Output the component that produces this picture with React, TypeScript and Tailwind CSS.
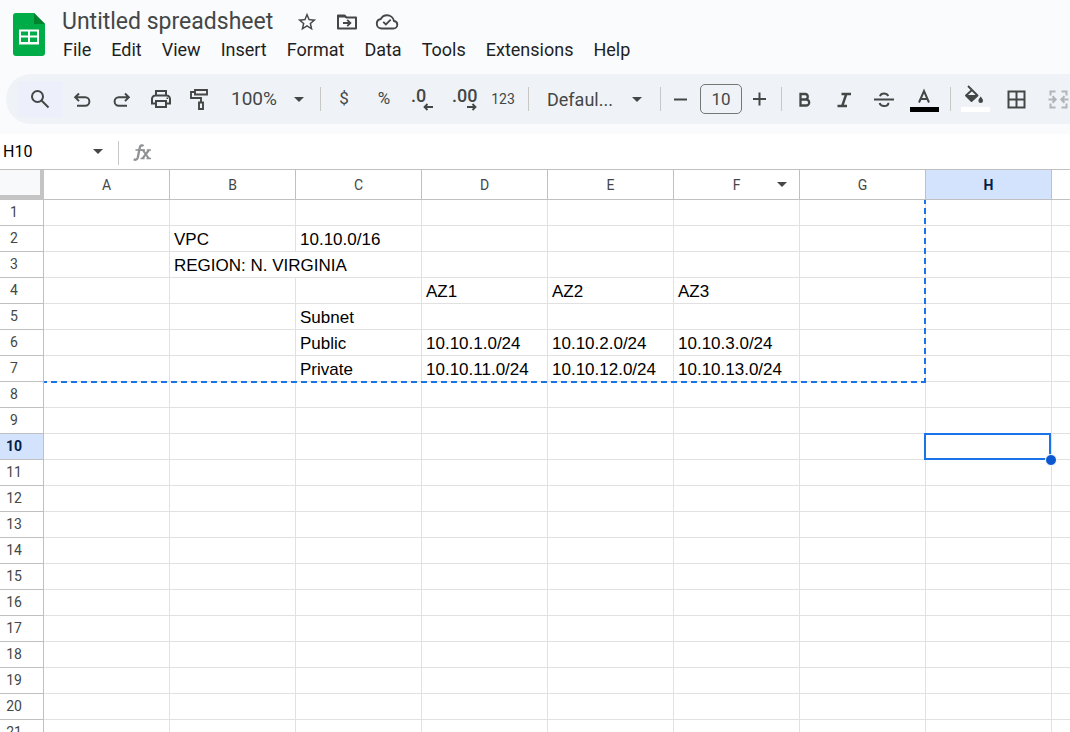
import type { ReactNode } from "react";

const menus = ["File", "Edit", "View", "Insert", "Format", "Data", "Tools", "Extensions", "Help"];
const columns = ["A", "B", "C", "D", "E", "F", "G", "H", ""];
const rows = Array.from({ length: 21 }, (_, i) => i + 1);

const cells: Record<string, string> = {
  B2: "VPC",
  C2: "10.10.0/16",
  B3: "REGION: N. VIRGINIA",
  D4: "AZ1",
  E4: "AZ2",
  F4: "AZ3",
  C5: "Subnet",
  C6: "Public",
  D6: "10.10.1.0/24",
  E6: "10.10.2.0/24",
  F6: "10.10.3.0/24",
  C7: "Private",
  D7: "10.10.11.0/24",
  E7: "10.10.12.0/24",
  F7: "10.10.13.0/24",
};

const spans: Record<string, number> = { B3: 2 };
const covered = new Set(["C3"]);

function Icon({ children, className = "size-6" }: { children: ReactNode; className?: string }) {
  return (
    <svg viewBox="0 0 24 24" className={`shrink-0 ${className}`} fill="none" stroke="currentColor" strokeWidth="2" aria-hidden="true">
      {children}
    </svg>
  );
}

function Caret({ className = "" }: { className?: string }) {
  return (
    <svg viewBox="0 0 10 5" className={`h-[5px] w-2.5 ${className}`} fill="currentColor" aria-hidden="true">
      <path d="M0 0h10L5 5z" />
    </svg>
  );
}

function Tool({ label, className = "w-10", children }: { label: string; className?: string; children: ReactNode }) {
  return (
    <button type="button" aria-label={label} className={`flex h-9 shrink-0 items-center justify-center ${className}`}>
      {children}
    </button>
  );
}

function Divider({ className = "" }: { className?: string }) {
  return <span className={`h-6 w-px shrink-0 bg-[#c7c7c7] ${className}`} />;
}

function Logo() {
  return (
    <svg viewBox="0 0 32 43" className="h-[43px] w-8 shrink-0" aria-hidden="true">
      <path d="M3 0h18l11 11v29a3 3 0 0 1-3 3H3a3 3 0 0 1-3-3V3a3 3 0 0 1 3-3z" fill="#00ac47" />
      <path d="M21 0l11 11H21z" fill="#00832d" />
      <path d="M6 16.500h20v15H6zM8 18.500v4h7v-4zM17 18.500v4h7v-4zM8 24.500v4.500h7v-4.500zM17 24.500v4.500h7v-4.500z" fill="#fff" fillRule="evenodd" />
    </svg>
  );
}

function Header() {
  return (
    <header className="flex pl-[13px] pt-2">
      <a href="#home" aria-label="Sheets home" className="mt-[5px]">
        <Logo />
      </a>
      <div className="ml-[17px]">
        <div className="flex h-7 items-center text-[#444746]">
          <input aria-label="Document title" defaultValue="Untitled spreadsheet" className="h-7 w-[233px] bg-transparent text-[23px] leading-7 outline-none" />
          <button type="button" aria-label="Star" className="flex w-6 justify-center">
            <Icon className="size-[22px]">
              <path fill="currentColor" stroke="none" d="M22 9.240l-7.190-.62L12 2 9.190 8.630 2 9.240l5.460 4.730L5.820 21 12 17.270 18.180 21l-1.630-7.030L22 9.240zM12 15.400l-3.760 2.270 1-4.280-3.320-2.880 4.380-.38L12 6.100l1.710 4.040 4.380.38-3.320 2.880 1 4.280L12 15.400z" />
            </Icon>
          </button>
          <button type="button" aria-label="Move" className="ml-4 flex w-6 justify-center">
            <Icon>
              <path d="M3 6v12.500h18V7.500H11.500L9.500 5.500H3z" strokeLinejoin="round" />
              <path d="M2.500 5h7l2 2.500h-9z" fill="currentColor" stroke="none" />
              <path d="M8 13h7M12.200 9.800l3.200 3.200-3.200 3.200" strokeWidth="1.800" />
            </Icon>
          </button>
          <button type="button" aria-label="Saved to Drive" className="ml-4 flex w-6 justify-center">
            <Icon>
              <path d="M19 11c-.6-3.300-3.500-5.800-7-5.800-2.700 0-5 1.500-6.200 3.800C3.400 9.400 1.800 11.300 1.800 13.700c0 2.600 2.100 4.800 4.800 4.800H18.400c2.200 0 3.900-1.700 3.900-3.800 0-2-1.400-3.500-3.300-3.700z" strokeWidth="1.900" />
              <path d="M8.200 11.800l2.700 2.700 4.800-4.900" strokeWidth="1.800" />
            </Icon>
          </button>
        </div>
        <nav className="flex h-7 items-center gap-5 pl-px text-[18px] leading-7 text-[#1f1f1f]">
          {menus.map((menu) => (
            <button key={menu} type="button">
              {menu}
            </button>
          ))}
        </nav>
      </div>
    </header>
  );
}

function Toolbar() {
  return (
    <div role="toolbar" aria-label="Formatting" className="mb-2.5 ml-1.5 mt-2.5 flex h-[50px] items-center overflow-hidden rounded-l-full bg-[#eff3f8] pl-[11px] text-[17px] text-[#444746]">
      <Tool label="Search the menus" className="w-[46px] bg-[#edf0fa]">
        <Icon>
          <circle cx="9.500" cy="9.500" r="5.500" />
          <path d="M13.500 13.500l7 7" />
        </Icon>
      </Tool>
      <Tool label="Undo" className="w-[38px]">
        <Icon>
          <path d="M9 6.500L5.200 10.300 9 14.100M5.200 10.300h10a4.200 4.200 0 0 1 0 8.400H7" />
        </Icon>
      </Tool>
      <Tool label="Redo">
        <Icon>
          <path d="M16 6.500l3.800 3.800L16 14.100M19.800 10.300h-10a4.200 4.200 0 0 0 0 8.400H18" />
        </Icon>
      </Tool>
      <Tool label="Print">
        <Icon>
          <path d="M7 8V4h10v4M7 16.500H3V12a3.500 3.500 0 0 1 3.500-3.500h11A3.500 3.500 0 0 1 21 12v4.500h-4" />
          <path d="M7 14h10v6H7z" />
          <path d="M17.500 10.500h1.600v1.600h-1.600z" fill="currentColor" stroke="none" />
        </Icon>
      </Tool>
      <Tool label="Paint format" className="w-9">
        <Icon>
          <path d="M8 3h12v4.500H8zM8 5H4v6h10v4" strokeWidth="1.900" />
          <path d="M12 15.500h4V22h-4z" strokeWidth="1.900" />
        </Icon>
      </Tool>
      <div className="grid shrink-0 items-center">
        <select aria-label="Zoom" className="col-start-1 row-start-1 h-9 w-[103px] appearance-none bg-transparent pl-3.5 text-[19px] outline-none">
          <option>100%</option>
        </select>
        <Caret className="pointer-events-none col-start-1 row-start-1 mr-4 justify-self-end" />
      </div>
      <Divider />
      <Tool label="Format as currency" className="w-[46px]">$</Tool>
      <Tool label="Format as percent" className="w-[34px]">%</Tool>
      <Tool label="Decrease decimal places" className="w-[42px]">
        <span className="grid w-[22px] pt-0.5">
          <span className="text-left text-[18px] font-medium leading-[14px]">.0</span>
          <svg viewBox="0 0 10 8" className="h-2 w-2.5 justify-self-end" fill="none" stroke="currentColor" strokeWidth="1.800" aria-hidden="true">
            <path d="M10 4H1.500M4.500 1l-3 3 3 3" />
          </svg>
        </span>
      </Tool>
      <Tool label="Increase decimal places">
        <span className="grid w-[22px] pt-0.5">
          <span className="text-left text-[18px] font-medium leading-[14px]">.00</span>
          <svg viewBox="0 0 10 8" className="h-2 w-2.5 justify-self-end" fill="none" stroke="currentColor" strokeWidth="1.800" aria-hidden="true">
            <path d="M0 4h8.500M5.500 1l3 3-3 3" />
          </svg>
        </span>
      </Tool>
      <Tool label="More formats">
        <span className="text-sm">123</span>
      </Tool>
      <Divider className="ml-[5px]" />
      <div className="grid shrink-0 items-center">
        <select aria-label="Font" className="col-start-1 row-start-1 h-9 w-[131px] appearance-none bg-transparent pl-[18px] text-[18px] outline-none">
          <option>Defaul...</option>
        </select>
        <Caret className="pointer-events-none col-start-1 row-start-1 mr-[18px] justify-self-end" />
      </div>
      <Divider />
      <Tool label="Decrease font size" className="w-[39px]">
        <Icon>
          <path d="M5 12.500h13" />
        </Icon>
      </Tool>
      <input aria-label="Font size" defaultValue="10" className="h-[30px] w-[42px] shrink-0 rounded-[5px] border border-[#747775] bg-transparent text-center text-[17px] outline-none" />
      <Tool label="Increase font size" className="w-9">
        <Icon>
          <path d="M5 12h13M11.500 5.500v13" />
        </Icon>
      </Tool>
      <Divider className="ml-[3px] mr-0.5" />
      <Tool label="Bold">
        <Icon>
          <path d="M8.500 7h5a2.800 2.800 0 0 1 0 5.500h-5zM8.500 12.500h5.700a3 3 0 0 1 0 6H8.500z" strokeWidth="2.300" />
        </Icon>
      </Tool>
      <Tool label="Italic">
        <Icon>
          <path d="M9.500 7H19M5.500 19H15M14.300 7L10.200 19" strokeWidth="2.400" />
        </Icon>
      </Tool>
      <Tool label="Strikethrough">
        <Icon>
          <path d="M2 12.500h20M8 9.200C8.500 7.500 10 6.500 12 6.500s3.500.9 4.300 2.500M7.600 16c.6 2 2.200 3 4.500 3 2.600 0 4.300-1.300 4.300-3.300" />
        </Icon>
      </Tool>
      <Tool label="Text color">
        <svg viewBox="0 0 30 26" className="h-[26px] w-[30px]" aria-hidden="true">
          <path d="M10 16.500L15 5l5 11.500M11.800 13h6.400" fill="none" stroke="currentColor" strokeWidth="2" />
          <path d="M1 21h29v5H1z" fill="#000" />
        </svg>
      </Tool>
      <Divider className="ml-1.5 mr-1" />
      <Tool label="Fill color">
        <svg viewBox="0 0 30 28" className="h-7 w-[30px]" aria-hidden="true">
          <path d="M8 1l9.500 9.500-6 5.500L6 10.500l6.500-6" fill="none" stroke="currentColor" strokeWidth="1.900" strokeLinejoin="round" />
          <path d="M6 10h11.500l-6 6z" fill="currentColor" />
          <path d="M20.700 11.500s2.300 2.600 2.300 4.200a2.300 2.300 0 0 1-4.600 0c0-1.600 2.300-4.200 2.300-4.200z" fill="currentColor" />
          <path d="M1 22h29v5H1z" fill="#fff" />
        </svg>
      </Tool>
      <Tool label="Borders" className="ml-[1px] w-10">
        <Icon>
          <path d="M4.500 4.500h16v16h-16zM12.500 4.500v16M4.500 12.500h16" />
        </Icon>
      </Tool>
      <Tool label="Merge cells" className="ml-0.5 w-10 text-[#b1b5b8]">
        <Icon>
          <path d="M9.500 4.500H4.500v4M4.500 16.500v4h5M15.500 4.500h5v4M20.500 16.500v4h-5M2.500 12.500H9M6.500 9.300L9.700 12.500 6.500 15.700M22.500 12.500H16M18.500 9.300L15.300 12.500l3.200 3.200" />
        </Icon>
      </Tool>
    </div>
  );
}

function FormulaBar() {
  return (
    <div className="flex h-[35px] items-center bg-white">
      <input aria-label="Name box" defaultValue="H10" className="h-7 w-[93px] bg-transparent pl-[3px] text-base text-black outline-none" />
      <Caret className="text-[#444746]" />
      <Divider className="ml-[15px] mt-0.5" />
      <label htmlFor="formula" aria-label="Formula" className="ml-3.5 mt-0.5 w-6 text-[#8f9194]">
        <svg viewBox="0 0 18 17" className="h-[17px] w-[18px]" fill="none" stroke="currentColor" aria-hidden="true">
          <path d="M10.500 2C9.200.8 7.300 1.200 6.800 3.500L4.800 13.500C4.300 15.600 2.500 16.300.7 15.300" strokeWidth="2.300" />
          <path d="M2.500 6h7" strokeWidth="1.600" />
          <path d="M9.800 6l6 8.500M16 6l-6.500 8.500" strokeWidth="2.100" />
          <path d="M8 6h4M13.800 6H18M7.500 14.500h4M13.500 14.500H18" strokeWidth="1.500" />
        </svg>
      </label>
      <input id="formula" aria-label="Formula" className="h-7 min-w-0 flex-1 bg-transparent outline-none" />
    </div>
  );
}

function Sheet() {
  return (
    <main className="relative min-h-0 flex-1 overflow-hidden border-t border-[#c0c0c0] bg-white">
      <table className="w-[1178px] table-fixed border-separate border-spacing-0">
        <colgroup>
          <col className="w-11" />
          {columns.map((c) => (
            <col key={c} className="w-[126px]" />
          ))}
        </colgroup>
        <thead className="text-sm leading-5 text-[#444746]">
          <tr className="h-[30px]">
            <td className="border-b-[5px] border-r-4 border-[#c4c4c4] bg-[#f8f9fa] p-0" />
            {columns.map((c) => (
              <th
                key={c}
                scope="col"
                className={`relative border-b border-r border-[#c0c0c0] p-0 ${c === "H" ? "bg-[#d3e3fd] font-bold text-[#041e49]" : "font-normal"}`}
              >
                {c}
                {c === "F" && <Caret className="absolute right-3 top-3" />}
              </th>
            ))}
          </tr>
        </thead>
        <tbody>
          {rows.map((r) => (
            <tr key={r} className="h-[26px]">
              <th
                scope="row"
                className={`border-b border-r border-[#c0c0c0] p-0 pb-0.5 pr-[15px] text-sm leading-4 ${r === 10 ? "bg-[#d3e3fd] font-bold text-[#041e49]" : "font-normal text-[#444746]"}`}
              >
                {r}
              </th>
              {columns.map((c) => {
                const id = `${c}${r}`;
                if (covered.has(id)) return null;
                return (
                  <td
                    key={id}
                    colSpan={spans[id]}
                    className="relative whitespace-nowrap border-b border-r border-[#e1e1e1] p-0 pl-1 pt-0.5 font-['Liberation_Sans',Arial,sans-serif] text-[17px] leading-5 text-black"
                  >
                    {cells[id]}
                    {id === "H10" && (
                      <span className="absolute -bottom-px -left-0.5 -top-px right-0 z-10 border-2 border-[#1a73e8]">
                        <span className="absolute -bottom-2 -right-2 size-3 rounded-full border border-white bg-[#0b57d0]" />
                      </span>
                    )}
                  </td>
                );
              })}
            </tr>
          ))}
        </tbody>
      </table>
      <div className="pointer-events-none absolute left-11 top-[30px] h-[183px] w-[882px]">
        <div className="absolute bottom-0 left-0 h-0.5 w-full bg-[repeating-linear-gradient(90deg,#1a73e8_0_3px,transparent_3px_7px,#1a73e8_7px_10px)]" />
        <div className="absolute right-0 top-0 h-full w-0.5 bg-[repeating-linear-gradient(180deg,#1a73e8_0_4px,transparent_4px_8px,#1a73e8_8px_10px)]" />
      </div>
    </main>
  );
}

export default function App() {
  return (
    <div className="flex h-screen flex-col overflow-hidden bg-[#f9fbfd] font-[Roboto,sans-serif]">
      <Header />
      <Toolbar />
      <FormulaBar />
      <Sheet />
    </div>
  );
}
